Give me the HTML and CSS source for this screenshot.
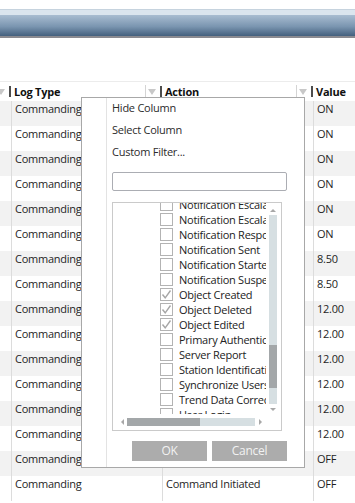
FILE: index.html
```html
<!DOCTYPE html>
<html>
<head>
<meta charset="utf-8">
<link rel="stylesheet" href="styles.css">
</head>
<body>
<div class="topbar"><div class="band"></div><div class="bar"></div></div>
<div class="spacer"></div>
<div class="grid">
  <div class="hdr">
    <div class="hc c0"><span class="fi"><i class="fl"></i><i class="tri"></i><i class="grip"></i></span></div>
    <div class="hc c1"><span class="ht">Log Type</span><span class="fi"><i class="fl"></i><i class="tri"></i><i class="grip"></i></span></div>
    <div class="hc c2"><span class="ht">Action</span><span class="fi"><i class="fl"></i><i class="tri"></i><i class="grip"></i></span></div>
    <div class="hc c3"><span class="ht">Value</span></div>
  </div>
  <div class="row alt"><div class="cell c0"></div><div class="cell c1">Commanding</div><div class="cell c2">Command Initiated</div><div class="cell c3">ON</div></div>
  <div class="row"><div class="cell c0"></div><div class="cell c1">Commanding</div><div class="cell c2">Command Initiated</div><div class="cell c3">ON</div></div>
  <div class="row alt"><div class="cell c0"></div><div class="cell c1">Commanding</div><div class="cell c2">Command Initiated</div><div class="cell c3">ON</div></div>
  <div class="row"><div class="cell c0"></div><div class="cell c1">Commanding</div><div class="cell c2">Command Initiated</div><div class="cell c3">ON</div></div>
  <div class="row alt"><div class="cell c0"></div><div class="cell c1">Commanding</div><div class="cell c2">Command Initiated</div><div class="cell c3">ON</div></div>
  <div class="row"><div class="cell c0"></div><div class="cell c1">Commanding</div><div class="cell c2">Command Initiated</div><div class="cell c3">ON</div></div>
  <div class="row alt"><div class="cell c0"></div><div class="cell c1">Commanding</div><div class="cell c2">Command Initiated</div><div class="cell c3">8.50</div></div>
  <div class="row"><div class="cell c0"></div><div class="cell c1">Commanding</div><div class="cell c2">Command Initiated</div><div class="cell c3">8.50</div></div>
  <div class="row alt"><div class="cell c0"></div><div class="cell c1">Commanding</div><div class="cell c2">Command Initiated</div><div class="cell c3">12.00</div></div>
  <div class="row"><div class="cell c0"></div><div class="cell c1">Commanding</div><div class="cell c2">Command Initiated</div><div class="cell c3">12.00</div></div>
  <div class="row alt"><div class="cell c0"></div><div class="cell c1">Commanding</div><div class="cell c2">Command Initiated</div><div class="cell c3">12.00</div></div>
  <div class="row"><div class="cell c0"></div><div class="cell c1">Commanding</div><div class="cell c2">Command Initiated</div><div class="cell c3">12.00</div></div>
  <div class="row alt"><div class="cell c0"></div><div class="cell c1">Commanding</div><div class="cell c2">Command Initiated</div><div class="cell c3">12.00</div></div>
  <div class="row"><div class="cell c0"></div><div class="cell c1">Commanding</div><div class="cell c2">Command Initiated</div><div class="cell c3">12.00</div></div>
  <div class="row alt"><div class="cell c0"></div><div class="cell c1">Commanding</div><div class="cell c2">Command Initiated</div><div class="cell c3">OFF</div></div>
  <div class="row"><div class="cell c0"></div><div class="cell c1">Commanding</div><div class="cell c2">Command Initiated</div><div class="cell c3">OFF</div></div>
</div>

<div class="popup">
  <div class="gutter"></div>
  <div class="pc">
    <div class="mi">Hide Column</div>
    <div class="mi">Select Column</div>
    <div class="mi">Custom Filter...</div>
    <div class="tb"></div>
    <div class="lb">
      <div class="vp">
        <div class="items">
          <div class="it"><span class="cb"></span><span class="lbl">Notification Escalated</span></div>
          <div class="it"><span class="cb"></span><span class="lbl">Notification Escalation</span></div>
          <div class="it"><span class="cb"></span><span class="lbl">Notification Response</span></div>
          <div class="it"><span class="cb"></span><span class="lbl">Notification Sent</span></div>
          <div class="it"><span class="cb"></span><span class="lbl">Notification Started</span></div>
          <div class="it"><span class="cb"></span><span class="lbl">Notification Suspended</span></div>
          <div class="it"><span class="cb"><svg viewBox="0 0 13 13" width="13" height="13"><path d="M2.5 6.5 L5.2 9.8 L10.5 2.5" fill="none" stroke="#a6a6a6" stroke-width="1.4"/></svg></span><span class="lbl">Object Created</span></div>
          <div class="it"><span class="cb"><svg viewBox="0 0 13 13" width="13" height="13"><path d="M2.5 6.5 L5.2 9.8 L10.5 2.5" fill="none" stroke="#a6a6a6" stroke-width="1.4"/></svg></span><span class="lbl">Object Deleted</span></div>
          <div class="it"><span class="cb"><svg viewBox="0 0 13 13" width="13" height="13"><path d="M2.5 6.5 L5.2 9.8 L10.5 2.5" fill="none" stroke="#a6a6a6" stroke-width="1.4"/></svg></span><span class="lbl">Object Edited</span></div>
          <div class="it"><span class="cb"></span><span class="lbl">Primary Authentication</span></div>
          <div class="it"><span class="cb"></span><span class="lbl">Server Report</span></div>
          <div class="it"><span class="cb"></span><span class="lbl">Station Identification</span></div>
          <div class="it"><span class="cb"></span><span class="lbl">Synchronize Users</span></div>
          <div class="it"><span class="cb"></span><span class="lbl">Trend Data Correction</span></div>
          <div class="it"><span class="cb"></span><span class="lbl">User Login</span></div>
        </div>
      </div>
      <div class="vs">
        <div class="arr"><i class="up"></i></div>
        <div class="trk"><div class="thumb"></div></div>
        <div class="arr"><i class="dn"></i></div>
      </div>
      <div class="hs">
        <div class="arr"><i class="lt"></i></div>
        <div class="trk"><div class="thumb"></div></div>
        <div class="arr"><i class="rt"></i></div>
      </div>
    </div>
    <div class="btns"><div class="btn">OK</div><div class="btn">Cancel</div></div>
  </div>
</div>
</body>
</html>
```

FILE: styles.css
```css
html, body {
  margin: 0;
  padding: 0;
  background: #fff;
  overflow: hidden;
}
body {
  font-family: "Open Sans", "Noto Sans", sans-serif;
  font-size: 11px;
  letter-spacing: -0.25px;
  color: #1e1e1e;
  width: 355px;
  height: 503px;
  position: relative;
}
i { display: block; font-style: normal; }

.topbar { padding-top: 9px; }
.band {
  height: 5px;
  border-top: 1px solid #c6d3de;
  background: #dbe5ee;
}
.bar {
  height: 21px;
  background: linear-gradient(#a9bdd1, #7a95b0 55%, #44607e);
  border-bottom: 2px solid #8a8a90;
}
.spacer { height: 43px; }

.grid { border-top: 1px solid #ececec; }
.hdr {
  display: flex;
  height: 19px;
}
.hc {
  display: flex;
  align-items: center;
  box-sizing: border-box;
  padding-left: 3px;
  overflow: hidden;
  line-height: 14px;
}
.c0 { width: 11px; flex: none; }
.c1 { width: 151px; flex: none; }
.c2 { width: 151px; flex: none; }
.c3 { flex: 1; }
.hc.c0 { padding-left: 0; justify-content: flex-end; }
.ht {
  flex: 1;
  font-weight: bold;
  color: #111;
  white-space: nowrap;
}
.fi {
  display: flex;
  align-items: center;
  flex: none;
}
.fl {
  width: 1px;
  height: 14px;
  background: #d4d4d4;
  margin-right: 2px;
}
.tri {
  width: 0;
  height: 0;
  border-left: 4px solid transparent;
  border-right: 4px solid transparent;
  border-top: 6px solid #c8c8c8;
  margin-right: 4px;
}
.grip {
  width: 2px;
  height: 11px;
  background: #4d4d4d;
}

.row {
  display: flex;
  height: 25px;
}
.row.alt { background: #f2f2f2; }
.cell {
  box-sizing: border-box;
  padding: 1px 0 0 3px;
  line-height: 14px;
  white-space: nowrap;
  overflow: hidden;
}
.cell.c1, .cell.c2, .cell.c3 { border-left: 1px solid #dcdcdc; }

/* popup menu */
.popup {
  position: absolute;
  left: 81px;
  top: 97px;
  width: 224px;
  height: 371px;
  box-sizing: border-box;
  border: 1px solid #a8a8a8;
  background: #fff;
  display: flex;
  color: #2b2b2b;
}
.gutter {
  width: 24px;
  border-right: 1px solid #e3e3e3;
  flex: none;
}
.pc {
  flex: 1;
  padding: 0 17px 0 5px;
  display: flex;
  flex-direction: column;
}
.mi {
  height: 22px;
  line-height: 20px;
  white-space: nowrap;
}
.tb {
  margin-top: 8px;
  height: 19px;
  box-sizing: border-box;
  border: 1px solid #abadb3;
  border-radius: 2px;
}
.lb {
  margin-top: 11px;
  width: 170px;
  height: 229px;
  box-sizing: border-box;
  border: 1px solid #cacaca;
  display: grid;
  grid-template-columns: 153px 8px;
  grid-template-rows: 211px 8px;
  column-gap: 3px;
  row-gap: 4px;
}
.vp {
  overflow: hidden;
}
.items {
  margin-top: -6px;
  padding-left: 47px;
}
.it {
  height: 15px;
  display: flex;
  align-items: center;
  white-space: nowrap;
  line-height: 15px;
  color: #222;
}
.cb {
  width: 13px;
  height: 13px;
  box-sizing: border-box;
  border: 1px solid #b3b3b3;
  background: #fff;
  flex: none;
  margin-right: 6px;
  position: relative;
}
.cb svg {
  display: block;
  margin: -1px;
}

.vs {
  margin-top: 2px;
  display: flex;
  flex-direction: column;
}
.vs .arr {
  height: 10px;
  display: flex;
  align-items: center;
  justify-content: center;
}
.vs .trk {
  flex: 1;
  background: #d6dfe2;
}
.vs .thumb {
  margin-top: 130px;
  height: 43px;
  background: #a3a7a9;
}
.up {
  border-left: 3px solid transparent;
  border-right: 3px solid transparent;
  border-bottom: 3px solid #a8a8a8;
}
.dn {
  border-left: 3px solid transparent;
  border-right: 3px solid transparent;
  border-top: 3px solid #a8a8a8;
}
.hs {
  margin-left: 4px;
  margin-right: 1px;
  display: flex;
}
.hs .arr {
  width: 10px;
  display: flex;
  align-items: center;
  justify-content: center;
}
.hs .trk {
  flex: 1;
  background: #d6dfe2;
}
.hs .thumb {
  width: 73px;
  height: 100%;
  background: #a3a7a9;
}
.lt {
  border-top: 3px solid transparent;
  border-bottom: 3px solid transparent;
  border-right: 3px solid #a8a8a8;
}
.rt {
  border-top: 3px solid transparent;
  border-bottom: 3px solid transparent;
  border-left: 3px solid #a8a8a8;
}

.btns {
  margin-top: 10px;
  display: flex;
  justify-content: flex-end;
  gap: 5px;
}
.btn {
  width: 75px;
  height: 20px;
  background: #acacac;
  color: #f2f2f2;
  font-size: 12px;
  line-height: 20px;
  text-align: center;
}
```
